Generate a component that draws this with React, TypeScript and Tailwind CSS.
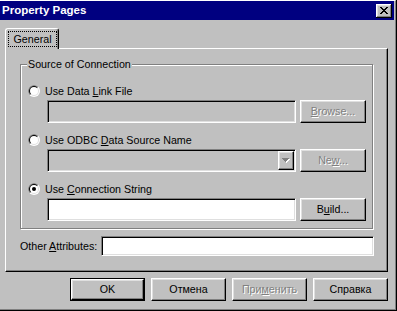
import React from "react";

const raised =
  "border border-t-white border-l-white border-r-black border-b-black shadow-[inset_-1px_-1px_#808080,inset_1px_1px_#dfdfdf]";
const sunken =
  "border border-t-[#808080] border-l-[#808080] border-r-white border-b-white shadow-[inset_1px_1px_#000,inset_-1px_-1px_#dfdfdf]";

function Radio({ checked }: { checked?: boolean }) {
  return (
    <svg width="12" height="12" viewBox="0 0 12 12" className="shrink-0">
      <circle cx="6" cy="6" r="6" fill="#fff" />
      <path d="M1.757 10.243 A6 6 0 0 1 10.243 1.757 Z" fill="#808080" />
      <circle cx="6" cy="6" r="5" fill="#dfdfdf" />
      <path d="M2.464 9.536 A5 5 0 0 1 9.536 2.464 Z" fill="#000" />
      <circle cx="6" cy="6" r="4" fill="#fff" />
      {checked && <circle cx="6" cy="6" r="2" fill="#000" />}
    </svg>
  );
}

function CloseButton() {
  const x: [number, number, number][] = [
    [0, 0, 2], [6, 0, 2],
    [1, 1, 2], [5, 1, 2],
    [2, 2, 4],
    [3, 3, 2],
    [2, 4, 4],
    [1, 5, 2], [5, 5, 2],
    [0, 6, 2], [6, 6, 2],
  ];
  return (
    <svg
      width="16"
      height="14"
      viewBox="0 0 16 14"
      shapeRendering="crispEdges"
      className="block shrink-0 ml-auto mt-[3px]"
    >
      <rect x="0" y="0" width="16" height="14" fill="#c0c0c0" />
      <rect x="0" y="0" width="15" height="1" fill="#ffffff" />
      <rect x="0" y="0" width="1" height="13" fill="#ffffff" />
      <rect x="1" y="1" width="13" height="1" fill="#dfdfdf" />
      <rect x="1" y="1" width="1" height="11" fill="#dfdfdf" />
      <rect x="1" y="12" width="14" height="1" fill="#808080" />
      <rect x="14" y="1" width="1" height="12" fill="#808080" />
      <rect x="0" y="13" width="16" height="1" fill="#000000" />
      <rect x="15" y="0" width="1" height="14" fill="#000000" />
      {x.map(([px, py, w], i) => (
        <rect key={i} x={px + 4} y={py + 3} width={w} height={1} fill="#000000" />
      ))}
    </svg>
  );
}

function DownArrowDisabled() {
  const rows: [number, number, number][] = [
    [0, 0, 7],
    [1, 1, 5],
    [2, 2, 3],
    [3, 3, 1],
  ];
  return (
    <svg width="8" height="5" viewBox="0 0 8 5" shapeRendering="crispEdges" className="block shrink-0">
      {rows.map(([x, y, w], i) => (
        <rect key={"w" + i} x={x + 1} y={y + 1} width={w} height={1} fill="#fff" />
      ))}
      {rows.map(([x, y, w], i) => (
        <rect key={"g" + i} x={x} y={y} width={w} height={1} fill="#808080" />
      ))}
    </svg>
  );
}

function Btn({
  children,
  w,
  disabled,
  isDefault,
}: {
  children: React.ReactNode;
  w: string;
  disabled?: boolean;
  isDefault?: boolean;
}) {
  const text = disabled ? "text-[#808080] [text-shadow:1px_1px_0_#fff]" : "text-black";
  if (isDefault) {
    return (
      <div className={`${w} h-[23px] border border-black flex`}>
        <div className={`flex-1 ${raised} flex items-center justify-center ${text}`}>{children}</div>
      </div>
    );
  }
  return (
    <div className={`${w} h-[23px] ${raised} flex items-center justify-center ${text}`}>{children}</div>
  );
}

function Option({
  label,
  checked,
  first,
  field,
  button,
}: {
  label: React.ReactNode;
  checked?: boolean;
  first?: boolean;
  field: React.ReactNode;
  button: React.ReactNode;
}) {
  return (
    <div className={first ? "" : "mt-[11px]"}>
      <div className="flex items-center gap-[5px] h-[12px]">
        <Radio checked={checked} />
        <span className="leading-[13px]">{label}</span>
      </div>
      <div className="flex mt-[3px] ml-[19px] gap-[4px]">
        {field}
        {button}
      </div>
    </div>
  );
}

export default function App() {
  return (
    <div className="w-[397px] h-[311px] bg-[#c0c0c0] border-r border-b border-black text-black font-['Liberation_Sans',Arial,sans-serif] text-[10.7px] leading-none select-none overflow-hidden">
      <div className="h-full flex flex-col border-t border-r border-b border-t-white border-r-[#808080] border-b-[#808080] pr-px">
        {/* Title bar */}
        <div className="h-[19px] shrink-0 bg-[#000080] flex items-start pl-[2px] pr-[2px]">
          <span className="mt-[3px] font-bold text-white text-[11.5px] leading-[13px]">Property Pages</span>
          <CloseButton />
        </div>

        {/* Body */}
        <div className="flex-1 pl-[5px] pr-[6px] pt-[8px] flex flex-col">
          {/* Tab */}
          <div className="relative z-10 -mb-px w-[54px] h-[21px] bg-[#c0c0c0] border-t border-l border-r border-t-white border-l-white border-r-black rounded-t-[3px] shadow-[inset_-1px_0_#808080] flex items-start pt-[2px] pl-[2px]">
            <div className="w-[49px] h-[16px] border border-dotted border-black flex items-center justify-center">
              General
            </div>
          </div>

          {/* Panel */}
          <div className="w-[383px] h-[224px] border border-t-white border-l-white border-r-black border-b-black shadow-[inset_-1px_-1px_#808080] flex flex-col">
            {/* Group box */}
            <div className="relative ml-[14px] mt-[15px] w-[353px] h-[165px] border border-[#808080] shadow-[inset_1px_1px_#fff,1px_1px_#fff] pt-[20px] pl-[7px]">
              <span className="absolute left-[6px] top-[-7px] bg-[#c0c0c0] px-[1px] leading-[13px]">
                Source of Connection
              </span>

              <Option
                first
                label={
                  <>
                    Use Data <u>L</u>ink File
                  </>
                }
                field={<div className={`w-[249px] h-[23px] ${sunken} bg-[#c0c0c0]`} />}
                button={
                  <Btn w="w-[66px]" disabled>
                    <span>
                      <u>B</u>rowse...
                    </span>
                  </Btn>
                }
              />

              <Option
                label={
                  <>
                    Use ODBC <u>D</u>ata Source Name
                  </>
                }
                field={
                  <div className={`w-[249px] h-[23px] ${sunken} bg-[#c0c0c0] flex justify-end p-px`}>
                    <div className={`w-[16px] h-full ${raised} flex items-center justify-center`}>
                      <DownArrowDisabled />
                    </div>
                  </div>
                }
                button={
                  <Btn w="w-[66px]" disabled>
                    <span>
                      Ne<u>w</u>...
                    </span>
                  </Btn>
                }
              />

              <Option
                checked
                label={
                  <>
                    Use <u>C</u>onnection String
                  </>
                }
                field={<div className={`w-[249px] h-[23px] ${sunken} bg-white`} />}
                button={
                  <Btn w="w-[66px]">
                    <span>
                      B<u>u</u>ild...
                    </span>
                  </Btn>
                }
              />
            </div>

            {/* Other attributes */}
            <div className="mt-[7px] ml-[14px] w-[354px] flex items-center">
              <span className="leading-[13px]">
                Other <u>A</u>ttributes:
              </span>
              <div className={`ml-auto w-[273px] h-[20px] ${sunken} bg-white`} />
            </div>
          </div>

          {/* Dialog buttons */}
          <div className="mt-[6px] flex justify-end gap-[6px]">
            <Btn w="w-[75px]" isDefault>
              OK
            </Btn>
            <Btn w="w-[75px]">Отмена</Btn>
            <Btn w="w-[75px]" disabled>
              <span>
                При<u>м</u>енить
              </span>
            </Btn>
            <Btn w="w-[75px]">Справка</Btn>
          </div>
        </div>
      </div>
    </div>
  );
}
